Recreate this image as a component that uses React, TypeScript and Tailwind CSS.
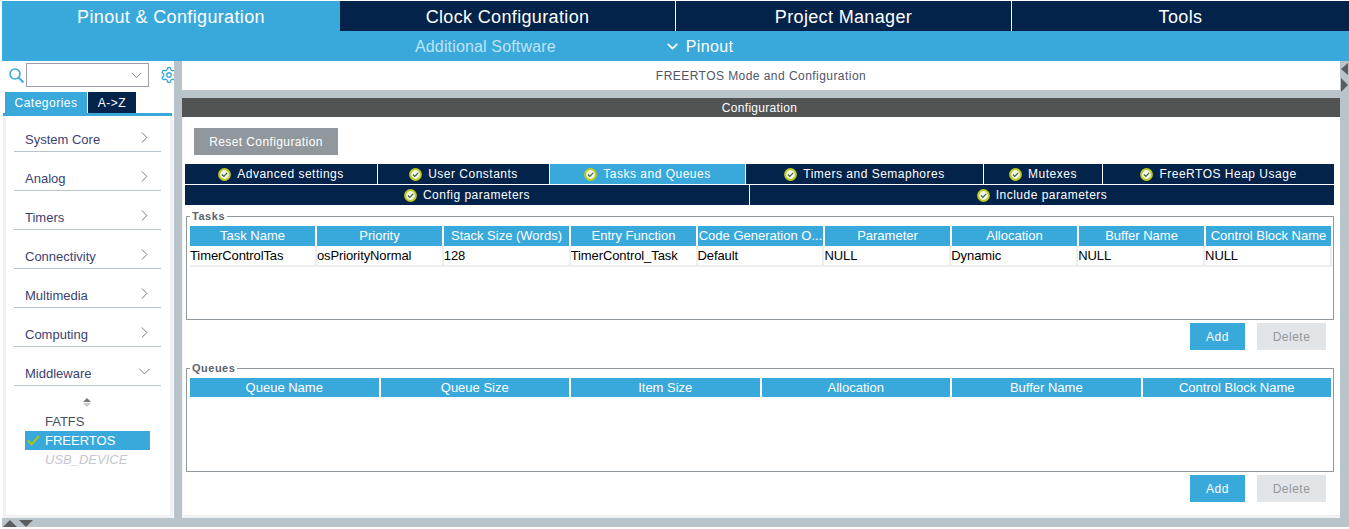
import { ChevronDown, ChevronRight, Settings } from 'lucide-react';

const mainTabs = [
  { label: 'Pinout & Configuration', width: 'w-[338px]', active: true },
  { label: 'Clock Configuration', width: 'w-[336px]', active: false },
  { label: 'Project Manager', width: 'w-[336px]', active: false },
  { label: 'Tools', width: 'flex-1', active: false },
];

const categories = ['System Core', 'Analog', 'Timers', 'Connectivity', 'Multimedia', 'Computing'];

const tabsTop = [
  { label: 'Advanced settings', width: 'w-[192px]', active: false },
  { label: 'User Constants', width: 'w-[171px]', active: false },
  { label: 'Tasks and Queues', width: 'w-[195px]', active: true },
  { label: 'Timers and Semaphores', width: 'w-[237px]', active: false },
  { label: 'Mutexes', width: 'w-[118px]', active: false },
  { label: 'FreeRTOS Heap Usage', width: 'flex-1', active: false },
];

const taskCols = [
  'Task Name',
  'Priority',
  'Stack Size (Words)',
  'Entry Function',
  'Code Generation O...',
  'Parameter',
  'Allocation',
  'Buffer Name',
  'Control Block Name',
];

const taskRow = [
  'TimerControlTas',
  'osPriorityNormal',
  '128',
  'TimerControl_Task',
  'Default',
  'NULL',
  'Dynamic',
  'NULL',
  'NULL',
];

const queueCols = ['Queue Name', 'Queue Size', 'Item Size', 'Allocation', 'Buffer Name', 'Control Block Name'];

function CheckBadge() {
  return (
    <svg width="13" height="13" viewBox="0 0 13 13" className="shrink-0">
      <circle cx="6.5" cy="6.5" r="5.4" fill="#f2f5e6" stroke="#bccb1e" strokeWidth="2" />
      <path d="M3.9 6.5 5.8 8.4 9.2 4.8" fill="none" stroke="#3f6048" strokeWidth="1.2" />
    </svg>
  );
}

function ConfigTab({ label, width, active }: { label: string; width: string; active?: boolean }) {
  return (
    <div
      className={`${width} flex items-center justify-center gap-[6px] tracking-[0.5px] text-[12px] text-white ${
        active ? 'bg-[#39a9dc]' : 'bg-[#03234b]'
      }`}
    >
      <CheckBadge />
      <span>{label}</span>
    </div>
  );
}

function FormButtons() {
  return (
    <div className="flex justify-end gap-3 pr-[14px] pt-[3px] text-[12px] tracking-[0.5px]">
      <button className="w-[55px] h-[27px] bg-[#39a9dc] text-white">Add</button>
      <button className="w-[69px] h-[27px] bg-[#e2e5e8] text-[#90989e]">Delete</button>
    </div>
  );
}

export default function App() {
  return (
    <div className="w-[1349px] h-[529px] overflow-hidden bg-white font-['Liberation_Sans',Arial,sans-serif] text-[12px] pt-px">
      <header className="ml-[2px]">
        <div className="flex h-[30px] text-white text-[18px] tracking-[0.35px] bg-[#03234b]">
          {mainTabs.map((tab) => (
            <div
              key={tab.label}
              className={`${tab.width} flex items-center justify-center pt-[2px] border-r border-white last:border-r-0 ${
                tab.active ? 'bg-[#39a9dc] border-r-0' : ''
              }`}
            >
              {tab.label}
            </div>
          ))}
        </div>
        <div className="flex h-[30px] bg-[#39a9dc] text-[16px] items-center pt-px">
          <span className="ml-[413px] text-[#bfe3f4] tracking-[0.15px]">Additional Software</span>
          <ChevronDown className="ml-[108px] text-white" size={17} strokeWidth={2.6} />
          <span className="ml-[5px] text-white tracking-[0.35px]">Pinout</span>
        </div>
      </header>

      <div className="flex ml-[2px] h-[466px] bg-[#b9c4ca] pb-[9px]">
        {/* left column */}
        <aside className="w-[172px] shrink-0 bg-white flex flex-col overflow-hidden">
          <div className="flex items-start h-[31px] pl-[7px] pt-[2px]">
            <svg width="15" height="15" viewBox="0 0 15 15" className="mt-[5px] text-[#39a9dc] shrink-0" fill="none" stroke="currentColor">
              <circle cx="6" cy="6" r="5" strokeWidth="1.6" />
              <path d="M9.6 9.6 14.4 14.4" strokeWidth="2" />
            </svg>
            <div className="ml-[2px] w-[123px] h-[24px] shrink-0 border border-[#9aa0a5] flex items-center justify-end pr-[3px]">
              <ChevronDown size={17} strokeWidth={1.1} className="text-[#555]" />
            </div>
            <Settings size={18} strokeWidth={1.8} className="ml-[11px] mt-[3px] text-[#39a9dc] shrink-0" />
          </div>
          <div className="flex ml-[3px] h-[21px] text-white tracking-[0.5px] gap-px">
            <div className="w-[82px] bg-[#39a9dc] flex items-center justify-center">Categories</div>
            <div className="w-[48px] bg-[#03234b] flex items-center justify-center">A-&gt;Z</div>
          </div>
          <div className="ml-px mr-[2px] h-[3px] bg-[#39a9dc]" />
          <div className="flex-1 ml-px border-x-[3px] border-b-[3px] border-[#f0f1f3] px-[8px] mr-px">
            <ul className="pt-[6px]">
              {categories.map((name) => (
                <li key={name} className="h-[30px] mb-[9px] w-[147px] border-b border-[#b9c4ca]">
                  <div className="flex justify-between h-[29px] items-center pt-[6px] pl-[11px] pr-[7px]">
                    <span className="text-[13px] text-[#3b4272]">{name}</span>
                    <ChevronRight size={19} strokeWidth={1.1} className="text-[#666] mt-[-5px]" />
                  </div>
                </li>
              ))}
              <li className="h-[30px] w-[147px] border-b border-[#b9c4ca]">
                <div className="flex justify-between h-[29px] items-center pt-[6px] pl-[11px] pr-[7px]">
                  <span className="text-[13px] text-[#3b4272]">Middleware</span>
                  <ChevronDown size={19} strokeWidth={1.1} className="text-[#666] mt-[-5px]" />
                </div>
              </li>
            </ul>
            <div className="flex flex-col items-center w-[124px] ml-[11px] pt-[12px]">
              <span className="w-0 h-0 border-x-[4px] border-x-transparent border-b-[4px] border-b-[#777]" />
              <span className="mt-px w-0 h-0 border-x-[4px] border-x-transparent border-t-[4px] border-t-[#c5c9cc]" />
            </div>
            <div className="ml-[11px] w-[125px] text-[13px] mt-[5px]">
              <div className="h-[19px] pl-[20px] flex items-center text-[#4a4f63]">FATFS</div>
              <div className="h-[19px] pl-[20px] flex items-center text-white bg-[#39a9dc] relative">
                <svg width="13" height="11" viewBox="0 0 13 11" className="absolute left-[2px] top-[4px]">
                  <path d="M1 5.5 4.5 9.5 12 1" fill="none" stroke="#a9c41c" strokeWidth="2" />
                </svg>
                FREERTOS
              </div>
              <div className="h-[19px] pl-[20px] flex items-center italic text-[#c4c8cc]">USB_DEVICE</div>
            </div>
          </div>
        </aside>

        {/* right column */}
        <main className="ml-[8px] w-[1158px] shrink-0 flex flex-col">
          <div className="h-[29px] bg-white flex items-center justify-center text-[#50556a] tracking-[0.45px]">
            FREERTOS Mode and Configuration
          </div>
          <div className="h-[8px]" />
          <div className="h-[19px] bg-[#525453] text-white flex items-center justify-center pr-[3px] tracking-[0.3px]">
            Configuration
          </div>
          <div className="flex-1 bg-white border-l border-b-[3px] border-l-[#f0f1f3] border-b-[#f0f1f3] flex flex-col pl-[2px]">
            <div className="pl-[9px] pt-[11px]">
              <button className="w-[144px] h-[27px] bg-[#90989e] text-white tracking-[0.4px]">Reset Configuration</button>
            </div>
            <div className="mt-[9px] w-[1149px] flex flex-col gap-px bg-white">
              <div className="flex h-[20px] gap-px">
                {tabsTop.map((tab) => (
                  <ConfigTab key={tab.label} {...tab} />
                ))}
              </div>
              <div className="flex h-[20px] gap-px">
                <ConfigTab label="Config parameters" width="w-[564px]" />
                <ConfigTab label="Include parameters" width="flex-1" />
              </div>
            </div>

            <fieldset className="mt-[6px] ml-px w-[1148px] h-[109px] min-w-0 border border-[#90989e] pl-[3px] pr-px">
              <legend className="px-[2px] text-[11px] font-bold tracking-[0.55px] text-[#5c6470] leading-[11px]">Tasks</legend>
              <div className="grid grid-cols-9 w-[1141px] gap-x-[2px] mt-[4px] text-[13px]">
                {taskCols.map((col) => (
                  <div key={col} className="h-[20px] bg-[#39a9dc] text-white flex items-center justify-center whitespace-nowrap overflow-hidden">
                    {col}
                  </div>
                ))}
              </div>
              <div className="grid grid-cols-9 w-[1142px] border-b-2 border-[#eceef0] text-black text-[13px] tracking-[-0.1px]">
                {taskRow.map((cell, i) => (
                  <div key={i} className="h-[19px] border-r-2 border-[#eceef0] flex items-center whitespace-nowrap overflow-hidden">
                    {cell}
                  </div>
                ))}
              </div>
            </fieldset>
            <FormButtons />

            <fieldset className="mt-[13px] ml-px w-[1148px] h-[109px] min-w-0 border border-[#90989e] pl-[3px] pr-px">
              <legend className="px-[2px] text-[11px] font-bold tracking-[0.5px] text-[#5c6470] leading-[11px]">Queues</legend>
              <div className="grid grid-cols-6 w-[1141px] gap-x-[2px] mt-[4px] text-[13px]">
                {queueCols.map((col) => (
                  <div key={col} className="h-[19px] bg-[#39a9dc] text-white flex items-center justify-center">
                    {col}
                  </div>
                ))}
              </div>
            </fieldset>
            <FormButtons />
          </div>
        </main>

        {/* collapse arrows for the right side */}
        <div className="relative flex-1">
          <span className="absolute left-px top-[2px] w-0 h-0 border-y-[6px] border-y-transparent border-r-[7px] border-r-[#5a5d5e]" />
          <span className="absolute left-px top-[17px] w-0 h-0 border-y-[7px] border-y-transparent border-l-[7px] border-l-[#5a5d5e]" />
        </div>
      </div>

      {/* collapse arrows for the bottom bar */}
      <div className="relative ml-[2px] h-0">
        <span className="absolute left-px top-[-7px] w-0 h-0 border-x-[7px] border-x-transparent border-b-[7px] border-b-[#5a5d5e]" />
        <span className="absolute left-[17px] top-[-7px] w-0 h-0 border-x-[7px] border-x-transparent border-t-[7px] border-t-[#5a5d5e]" />
      </div>
    </div>
  );
}
